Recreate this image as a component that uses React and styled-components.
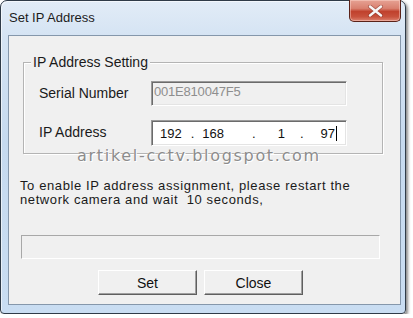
import React from "react";
import styled, { createGlobalStyle } from "styled-components";

const GlobalStyle = createGlobalStyle`
  html, body {
    margin: 0;
    padding: 0;
    background: #ffffff;
  }
  body {
    font-family: "Liberation Sans", Arial, sans-serif;
  }
`;

const ipParts = [
  { text: "192", gap: 0 },
  { text: ".", gap: 9 },
  { text: "168", gap: 8 },
  { text: ".", gap: 28 },
  { text: "1", gap: 22 },
  { text: ".", gap: 15 },
  { text: "97", gap: 17 },
];

export default function App() {
  return (
    <>
      <GlobalStyle />
      <Window>
        <TitleBar>
          <Title>Set IP Address</Title>
          <CloseBox aria-label="Close">
            <svg width="17" height="12" viewBox="0 0 17 12">
              <path
                d="M3 1.5 L14 10.5 M14 1.5 L3 10.5"
                stroke="#7a2a20"
                strokeWidth="4"
                strokeLinecap="round"
                opacity="0.5"
              />
              <path
                d="M3 1.5 L14 10.5 M14 1.5 L3 10.5"
                stroke="#f6f6f6"
                strokeWidth="2.4"
                strokeLinecap="round"
              />
            </svg>
          </CloseBox>
        </TitleBar>

        <Client>
          <GroupBox>
            <Legend>IP Address Setting</Legend>
            <Row>
              <Label>Serial Number</Label>
              <Field $disabled>
                <SerialText>001E810047F5</SerialText>
              </Field>
            </Row>
            <Row $tall>
              <Label>IP Address</Label>
              <Field>
                <IpLine>
                  {ipParts.map((p, i) => (
                    <IpPart key={i} $gap={p.gap}>
                      {p.text}
                    </IpPart>
                  ))}
                  <Caret />
                </IpLine>
              </Field>
            </Row>
          </GroupBox>

          <Notice>
            To enable IP address assignment, please restart the
            <br />
            network camera and wait&nbsp; 10 seconds,
          </Notice>

          <Progress />

          <ButtonRow>
            <Button>Set</Button>
            <Button>Close</Button>
          </ButtonRow>

          <Watermark>artikel-cctv.blogspot.com</Watermark>
        </Client>
      </Window>
    </>
  );
}

const Window = styled.div`
  position: relative;
  box-sizing: border-box;
  width: 406px;
  height: 314px;
  border: 1px solid #2f3b48;
  border-radius: 7px 7px 4px 4px;
  background: linear-gradient(
    180deg,
    #e2ecf7 0%,
    #d4e3f3 12%,
    #c6daef 45%,
    #c9ddf2 100%
  );
  box-shadow: 2px 2px 3px rgba(0, 0, 0, 0.45),
    inset 1px 1px 0 rgba(255, 255, 255, 0.6);
  display: flex;
  flex-direction: column;
  padding: 0 4px 8px 7px;
`;

const TitleBar = styled.div`
  height: 34px;
  display: flex;
  align-items: flex-start;
  justify-content: space-between;
`;

const Title = styled.div`
  font-size: 13px;
  line-height: 34px;
  color: #1c1c1c;
  padding-left: 1px;
`;

const CloseBox = styled.div`
  margin-top: -1px;
  width: 52px;
  height: 22px;
  box-sizing: border-box;
  border: 1px solid #5a2219;
  border-top: none;
  border-radius: 0 0 5px 5px;
  background: linear-gradient(
    180deg,
    #e6a294 0%,
    #d9806f 40%,
    #c0412d 55%,
    #c8523d 80%,
    #dc8270 100%
  );
  box-shadow: inset 0 0 0 1px rgba(255, 220, 210, 0.45);
  display: flex;
  align-items: center;
  justify-content: center;
`;

const Client = styled.div`
  position: relative;
  flex: 1;
  display: flex;
  flex-direction: column;
  align-items: flex-start;
  background: #f0f0f0;
  border: 1px solid #8597ab;
`;

const GroupBox = styled.div`
  position: relative;
  box-sizing: border-box;
  width: 360px;
  height: 92px;
  margin: 26px 0 0 14px;
  padding: 18px 0 0 15px;
  border: 1px solid #b4b4b4;
  box-shadow: inset 1px 1px 0 #ffffff, 1px 1px 0 #ffffff;
  display: flex;
  flex-direction: column;
  gap: 14px;
`;

const Legend = styled.div`
  position: absolute;
  top: -9px;
  left: 7px;
  padding: 0 2px;
  background: #f0f0f0;
  font-size: 14px;
  line-height: 16px;
  color: #1a1a1a;
`;

const Row = styled.div`
  display: flex;
  align-items: center;
  height: ${(p) => (p.$tall ? "26px" : "25px")};
`;

const Label = styled.div`
  width: 112px;
  font-size: 14px;
  color: #1a1a1a;
  margin-top: -2px;
`;

const Field = styled.div`
  box-sizing: border-box;
  width: 196px;
  height: 100%;
  background: ${(p) => (p.$disabled ? "#f0f0f0" : "#ffffff")};
  border: 1px solid;
  border-color: #9a9a9a #ffffff #ffffff #9a9a9a;
  box-shadow: inset 1px 1px 0 #6b6b6b, inset -1px -1px 0 #e4e4e4;
  padding: 2px 0 0 2px;
`;

const SerialText = styled.div`
  font-size: 13px;
  line-height: 15px;
  color: #8e8e8e;
  letter-spacing: -0.2px;
`;

const IpLine = styled.div`
  display: flex;
  align-items: center;
  height: 20px;
  padding-left: 6px;
  font-size: 13px;
  color: #111111;
`;

const IpPart = styled.span`
  margin-left: ${(p) => p.$gap}px;
`;

const Caret = styled.span`
  width: 1px;
  height: 15px;
  margin-left: 1px;
  background: #000000;
`;

const Notice = styled.div`
  margin: 25px 0 0 11px;
  font-size: 13px;
  line-height: 14px;
  letter-spacing: 0.6px;
  color: #1a1a1a;
`;

const Progress = styled.div`
  box-sizing: border-box;
  width: 359px;
  height: 24px;
  margin: 28px 0 0 12px;
  background: #f0f0f0;
  border: 1px solid;
  border-color: #a8a8a8 #ffffff #ffffff #a8a8a8;
`;

const ButtonRow = styled.div`
  width: 359px;
  margin: 11px 0 0 12px;
  display: flex;
  justify-content: center;
  gap: 7px;
`;

const Button = styled.div`
  box-sizing: border-box;
  width: 99px;
  height: 25px;
  display: flex;
  align-items: center;
  justify-content: center;
  font-size: 14px;
  color: #111111;
  background: #f0f0f0;
  border: 1px solid;
  border-color: #ffffff #5f5f5f #5f5f5f #ffffff;
  box-shadow: inset -1px -1px 0 #a0a0a0;
`;

const Watermark = styled.div`
  position: absolute;
  left: 68px;
  top: 110px;
  font-family: "DejaVu Sans", sans-serif;
  font-size: 16px;
  letter-spacing: 1.7px;
  color: #8c8c8c;
  text-shadow: 0 0 1px #ffffff, 1px 1px 0 #ffffff;
`;
